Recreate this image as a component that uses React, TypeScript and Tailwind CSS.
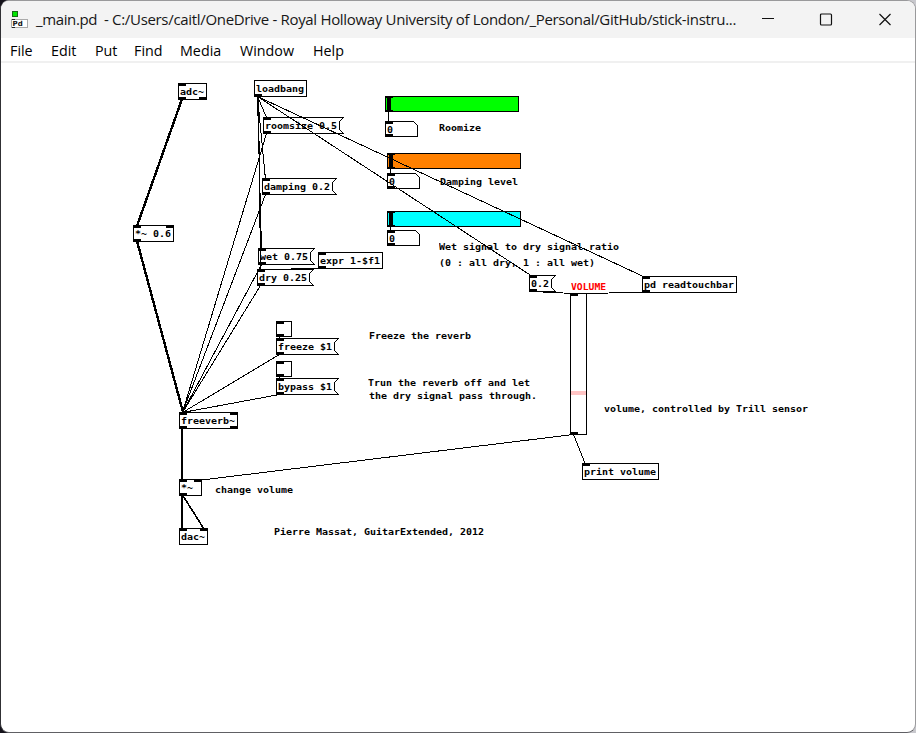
type Port = [number, number, number?];

interface PatchNode {
  kind: "object" | "message" | "number";
  x: number;
  y: number;
  w: number;
  text: string;
  ports: Port[];
}

const nodes: PatchNode[] = [
  { kind: "object", x: 178, y: 83, w: 29, text: "adc~", ports: [[0, 0], [0, 1], [21, 1]] },
  { kind: "object", x: 133, y: 225, w: 41, text: "*~ 0.6", ports: [[0, 0], [33, 0], [0, 1]] },
  { kind: "object", x: 254, y: 80, w: 53, text: "loadbang", ports: [[0, 1]] },
  { kind: "message", x: 263, y: 117, w: 81, text: "roomsize 0.5", ports: [[0, 0], [0, 1]] },
  { kind: "message", x: 262, y: 178, w: 75, text: "damping 0.2", ports: [[0, 0], [0, 1]] },
  { kind: "message", x: 258, y: 248, w: 57, text: "wet 0.75", ports: [[0, 0], [0, 1]] },
  { kind: "message", x: 257, y: 269, w: 57, text: "dry 0.25", ports: [[0, 0], [0, 1]] },
  { kind: "object", x: 318, y: 252, w: 65, text: "expr 1-$f1", ports: [[0, 0], [0, 1]] },
  { kind: "message", x: 276, y: 338, w: 63, text: "freeze $1", ports: [[0, 0], [0, 1]] },
  { kind: "message", x: 276, y: 378, w: 63, text: "bypass $1", ports: [[0, 0], [0, 1]] },
  { kind: "object", x: 179, y: 412, w: 59, text: "freeverb~", ports: [[0, 0], [51, 0], [0, 1], [51, 1]] },
  { kind: "object", x: 179, y: 479, w: 23, text: "*~", ports: [[0, 0], [15, 0], [0, 1]] },
  { kind: "object", x: 179, y: 528, w: 29, text: "dac~", ports: [[0, 0], [21, 0]] },
  { kind: "object", x: 582, y: 463, w: 77, text: "print volume", ports: [[0, 0]] },
  { kind: "message", x: 529, y: 275, w: 27, text: "0.2", ports: [[0, 0], [0, 1]] },
  { kind: "object", x: 642, y: 276, w: 95, text: "pd readtouchbar", ports: [[0, 0], [0, 1]] },
  { kind: "number", x: 385, y: 121, w: 33, text: "0", ports: [[0, 0], [0, 1]] },
  { kind: "number", x: 387, y: 173, w: 33, text: "0", ports: [[0, 0], [0, 1]] },
  { kind: "number", x: 387, y: 230, w: 33, text: "0", ports: [[0, 0], [0, 1]] },
];

const comments = [
  { x: 439, y: 122, text: "Roomize" },
  { x: 440, y: 176, text: "Damping level" },
  { x: 439, y: 241, text: "Wet signal to dry signal ratio" },
  { x: 439, y: 257, text: "(0 : all dry, 1 : all wet)" },
  { x: 369, y: 330, text: "Freeze the reverb" },
  { x: 368, y: 377, text: "Trun the reverb off and let" },
  { x: 369, y: 390, text: "the dry signal pass through." },
  { x: 604, y: 403, text: "volume, controlled by Trill sensor" },
  { x: 215, y: 484, text: "change volume" },
  { x: 274, y: 526, text: "Pierre Massat, GuitarExtended, 2012" },
];

const sliders = [
  { x: 385, y: 96, color: "#00ff00" },
  { x: 387, y: 153, color: "#ff8000" },
  { x: 387, y: 211, color: "#00ffff" },
];

const signalWires = [
  [182, 99, 137, 226],
  [137, 241, 183, 412],
  [182, 428, 182, 480],
  [182, 495, 182, 529],
];

const wires = [
  [257, 96, 266, 117],
  [257, 96, 265, 179],
  [257, 96, 261, 249],
  [258, 96, 260, 270],
  [257, 96, 532, 276],
  [257, 96, 645, 277],
  [266, 133, 182, 412],
  [265, 194, 182, 412],
  [261, 264, 182, 412],
  [260, 285, 182, 412],
  [279, 354, 182, 412],
  [279, 394, 182, 412],
  [279, 336, 279, 339],
  [279, 376, 279, 379],
  [388, 111, 388, 122],
  [390, 168, 390, 174],
  [390, 226, 390, 231],
  [532, 291, 573, 293],
  [645, 292, 573, 293],
  [573, 434, 585, 464],
  [573, 434, 197, 480],
  [321, 268, 260, 269],
];

const menus = [
  { label: "File", cls: "w-[41px]" },
  { label: "Edit", cls: "w-[44px]" },
  { label: "Put", cls: "w-[39px]" },
  { label: "Find", cls: "w-[46px]" },
  { label: "Media", cls: "w-[60px]" },
  { label: "Window", cls: "w-[73px]" },
  { label: "Help", cls: "w-[40px]" },
];

function outline(n: PatchNode) {
  const r = n.w - 1;
  if (n.kind === "message") return `M${r} 0H0V16H${r}L${r - 4} 12V4Z`;
  if (n.kind === "number") return `M0 0H${r - 4}L${r} 4V15H0Z`;
  return `M0 0H${r}V16H0Z`;
}

function Patch() {
  return (
    <svg className="absolute inset-0 h-[733px] w-[916px]" shapeRendering="crispEdges">
      {sliders.map((s) => (
        <g key={s.y} transform={`translate(${s.x} ${s.y})`}>
          <rect x=".5" y=".5" width="133" height="15" fill={s.color} stroke="#000" />
          <path d="M0 0h8v2h-2v12h2v2H0v-2h2V2H0z" />
        </g>
      ))}
      <rect x="570.5" y="293.5" width="16" height="141" fill="#fff" stroke="#000" />
      <path d="M571 293h7v3h-7zM571 432h7v3h-7z" />
      <rect x="571" y="391" width="15" height="4" fill="#ffc4c4" />
      {[321, 361].map((y) => (
        <g key={y}>
          <rect x="276.5" y={y + 0.5} width="15" height="15" fill="#fff" stroke="#000" />
          <path d={`M277 ${y}h7v3h-7zM277 ${y + 13}h7v3h-7z`} />
        </g>
      ))}
      {nodes.map((n) => (
        <g key={`${n.x}-${n.y}`} transform={`translate(${n.x} ${n.y})`}>
          <path d={outline(n)} transform="translate(.5 .5)" fill="#fff" stroke="#000" />
          {n.ports.map(([px, bottom], i) => (
            <rect key={i} x={px} y={bottom ? (n.kind === "number" ? 13 : 14) : 0} width="8" height="3" />
          ))}
        </g>
      ))}
      {signalWires.map(([a, b, c, d], i) => (
        <line key={i} x1={a} y1={b} x2={c} y2={d} stroke="#000" strokeWidth="2.4" />
      ))}
      <line x1="182.5" y1="495" x2="204" y2="529" stroke="#000" strokeWidth="1.6" />
      {wires.map(([a, b, c, d], i) => (
        <line key={i} x1={a + 0.5} y1={b + 0.5} x2={c + 0.5} y2={d + 0.5} stroke="#000" />
      ))}
    </svg>
  );
}

export default function App() {
  return (
    <div className="h-[733px] w-[916px] bg-gradient-to-r from-[#14121a] from-50% to-[#c9c9ce]">
      <div className="relative flex h-full w-full flex-col overflow-hidden rounded-[9px] border border-t-[#99999b] border-r-[#99999b] border-b-[#606064] border-l-[#303034] bg-white">
        <header className="flex h-[37px] shrink-0 items-center bg-[#f3f3f3] pl-[10px] font-['Open_Sans',sans-serif] text-[15px] text-[#171717]">
          <svg className="h-[18px] w-[18px] shrink-0" shapeRendering="crispEdges">
            <rect x="1.5" y=".5" width="5" height="5" fill="#00e600" stroke="#176817" />
            <rect x=".5" y="8.5" width="16" height="8" fill="#fff" stroke="#aaa" />
            <path d="M1 8h3v1H1zM1 16h3v1H1z" fill="#222" />
            <text x="1.5" y="15" fontFamily="DejaVu Sans" fontWeight="700" fontSize="7" fill="#111">Pd</text>
          </svg>
          <span className="ml-[7px] w-[68px] whitespace-pre tracking-[-0.38px]">_main.pd</span>
          <span className="w-[640px] whitespace-nowrap tracking-[-0.32px]">
            - C:/Users/caitl/OneDrive - Royal Holloway University of London/_Personal/GitHub/stick-instru...
          </span>
          <svg className="ml-auto mr-[24px] h-[14px] w-[130px] shrink-0" fill="none" stroke="#111" strokeWidth="1.2">
            <path d="M1 5.5h12" />
            <rect x="59.5" y="1" width="11" height="11" rx="1" />
            <path d="m118.5 1 11 11m0-11-11 11" />
          </svg>
        </header>
        <nav className="flex h-[25px] shrink-0 items-center border-b-2 border-[#f0f0f0] pt-[2px] pl-[9px] font-['Open_Sans',sans-serif] text-[14.3px] text-black">
          {menus.map((m) => (
            <span key={m.label} className={m.cls}>{m.label}</span>
          ))}
        </nav>
        <main className="absolute -left-px -top-px h-[733px] w-[916px] font-['DejaVu_Sans_Mono',monospace] text-[9px] font-bold leading-[12px] whitespace-pre text-black">
          <Patch />
          {nodes.map((n) => (
            <span key={`${n.x}-${n.y}`} className="absolute origin-left scale-x-[1.107]" style={{ left: n.x + 2, top: n.y + 3 }}>{n.text}</span>
          ))}
          {comments.map((c) => (
            <span key={c.text} className="absolute origin-left scale-x-[1.107]" style={{ left: c.x, top: c.y }}>{c.text}</span>
          ))}
          <span className="absolute left-[571px] top-[281px] origin-left scale-x-[1.08] text-[#ff0000]">VOLUME</span>
        </main>
      </div>
    </div>
  );
}
